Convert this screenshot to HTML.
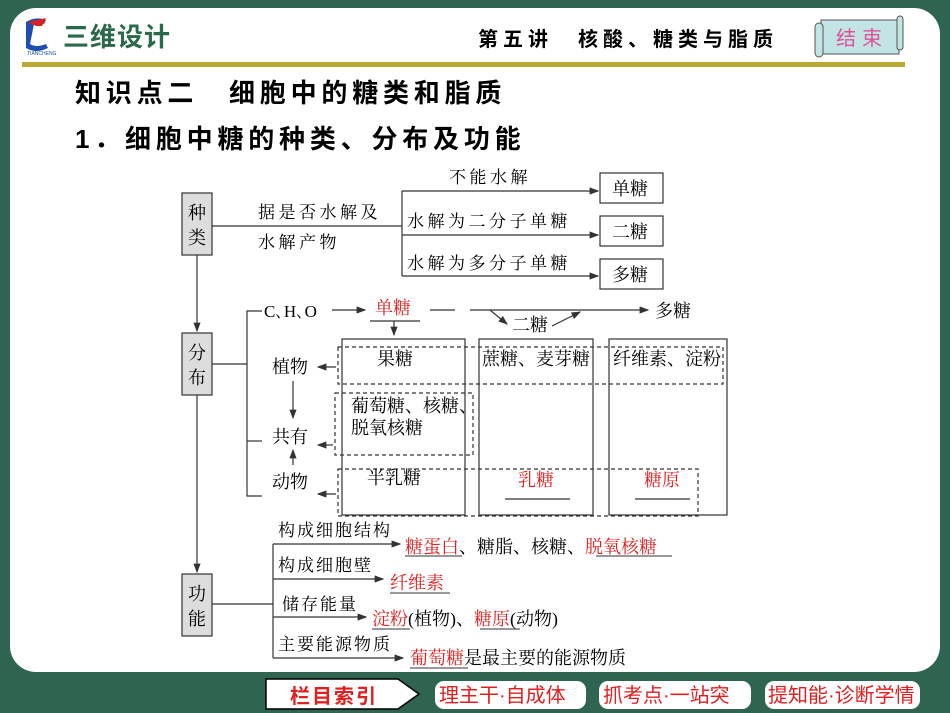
<!DOCTYPE html>
<html><head><meta charset="utf-8"><style>
body{margin:0;width:950px;height:713px;background:#2f6450;overflow:hidden;font-family:"Liberation Serif","Noto Serif CJK SC","Noto Sans CJK SC",serif;}
#card{position:absolute;left:10px;top:8px;width:930px;height:664px;background:#fff;border-radius:26px;}
svg{position:absolute;left:0;top:0}
</style></head><body>
<div id="card"></div>
<svg width="950" height="713" viewBox="0 0 950 713" font-family="'Liberation Serif','Noto Serif CJK SC',serif">
<defs><marker id="a" markerWidth="8" markerHeight="6" refX="7" refY="3" orient="auto"><path d="M0,0L8,3L0,6z" fill="#333"/></marker></defs>
<!-- header -->
<path d="M26,22 Q36,16 46,20 L44,24 Q38,22 34,24 L30,44 Q36,48 46,44 L48,48 Q36,54 26,48 Z" fill="#1e4fb0"/>
<path d="M28,22 L46,18 L42,26 L36,26 Z" fill="#e02020"/>
<text x="27" y="55" font-size="5" fill="#1e4fb0" font-family="Liberation Sans">TIANCHENG</text>
<text x="63" y="46" font-size="26" font-weight="bold" fill="#2a6a4a" font-family="'Liberation Sans','Noto Sans CJK SC',sans-serif" letter-spacing="1">三维设计</text>
<text x="478" y="46" font-size="20" font-weight="bold" fill="#000" font-family="'Liberation Sans','Noto Sans CJK SC',sans-serif" letter-spacing="5">第五讲　核酸、糖类与脂质</text>
<rect x="821" y="20" width="78" height="34" fill="#c2e4e4" stroke="#555" stroke-width="1"/>
<rect x="815" y="23" width="8" height="34" rx="4" fill="#c2e4e4" stroke="#555"/>
<rect x="897" y="16" width="6" height="34" rx="3" fill="#c2e4e4" stroke="#555"/>
<text x="836" y="45" font-size="20" fill="#e0509a" font-family="'Noto Sans CJK SC',sans-serif" letter-spacing="6">结束</text>
<rect x="22" y="62" width="883" height="5" fill="#b8aa35"/>
<g font-family="'Liberation Sans','Noto Sans CJK SC',sans-serif" font-weight="bold" font-size="26" fill="#000" letter-spacing="4.8">
<text x="75" y="102">知识点二　细胞中的糖类和脂质</text>
<text x="75" y="148">1．细胞中糖的种类、分布及功能</text>
</g>
<!-- diagram -->
<g stroke="#333" stroke-width="1.2" fill="none">
<rect x="182" y="193" width="30" height="62" fill="#ddd"/>
<rect x="182" y="333" width="30" height="62" fill="#ddd"/>
<rect x="182" y="574" width="30" height="62" fill="#ddd"/>
<line x1="197" y1="255" x2="197" y2="331" marker-end="url(#a)"/>
<line x1="197" y1="395" x2="197" y2="572" marker-end="url(#a)"/>
<line x1="212" y1="226" x2="402" y2="226"/>
<line x1="402" y1="191" x2="402" y2="276"/>
<line x1="402" y1="191" x2="598" y2="191" marker-end="url(#a)"/>
<line x1="402" y1="235" x2="598" y2="235" marker-end="url(#a)"/>
<line x1="402" y1="276" x2="598" y2="276" marker-end="url(#a)"/>
<rect x="600" y="173" width="63" height="30"/>
<rect x="600" y="216" width="63" height="30"/>
<rect x="600" y="259" width="63" height="30"/>
<line x1="212" y1="364" x2="247" y2="364"/>
<polyline points="262,311 247,311 247,496 262,496"/>
<line x1="247" y1="441" x2="262" y2="441"/>
<line x1="332" y1="310" x2="365" y2="310" marker-end="url(#a)"/>
<line x1="370" y1="321" x2="420" y2="321"/>
<line x1="394" y1="321" x2="394" y2="335" marker-end="url(#a)"/>
<line x1="430" y1="310" x2="455" y2="310"/>
<line x1="470" y1="310" x2="648" y2="310" marker-end="url(#a)"/>
<line x1="490" y1="310" x2="507" y2="324" marker-end="url(#a)"/>
<line x1="552" y1="326" x2="580" y2="312" marker-end="url(#a)"/>
<rect x="342" y="339" width="123" height="176"/>
<rect x="479" y="339" width="114" height="176"/>
<rect x="609" y="339" width="118" height="176"/>
<g stroke-dasharray="4,3">
<rect x="338" y="347" width="385" height="37"/>
<rect x="335" y="393" width="138" height="62"/>
<rect x="338" y="469" width="360" height="47"/>
</g>
<line x1="336" y1="367" x2="318" y2="367" marker-end="url(#a)"/>
<line x1="333" y1="445" x2="318" y2="445" marker-end="url(#a)"/>
<line x1="336" y1="494" x2="318" y2="494" marker-end="url(#a)"/>
<line x1="293" y1="381" x2="293" y2="418" marker-end="url(#a)"/>
<line x1="293" y1="465" x2="293" y2="450" marker-end="url(#a)"/>
<line x1="505" y1="499" x2="570" y2="499"/>
<line x1="635" y1="499" x2="690" y2="499"/>
<line x1="212" y1="604" x2="273" y2="604"/>
<line x1="273" y1="544" x2="273" y2="658"/>
<line x1="273" y1="544" x2="400" y2="544" marker-end="url(#a)"/>
<line x1="273" y1="579" x2="383" y2="579" marker-end="url(#a)"/>
<line x1="273" y1="617" x2="366" y2="617" marker-end="url(#a)"/>
<line x1="273" y1="658" x2="403" y2="658" marker-end="url(#a)"/>
<g stroke-width="1">
<line x1="405" y1="556" x2="462" y2="556"/><line x1="596" y1="556" x2="672" y2="556"/>
<line x1="390" y1="593" x2="450" y2="593"/><line x1="372" y1="629" x2="410" y2="629"/>
<line x1="480" y1="629" x2="520" y2="629"/><line x1="410" y1="668" x2="468" y2="668"/>
</g>
</g>
<g font-size="18" fill="#000">
<text x="188" y="219">种</text><text x="188" y="244">类</text>
<text x="188" y="359">分</text><text x="188" y="384">布</text>
<text x="188" y="600">功</text><text x="188" y="625">能</text>
<g font-size="17" letter-spacing="3.5">
<text x="258" y="218">据是否水解及</text>
<text x="258" y="248">水解产物</text>
<text x="449" y="183">不能水解</text>
<text x="407" y="227">水解为二分子单糖</text>
<text x="407" y="269">水解为多分子单糖</text>
</g>
<text x="612" y="195">单糖</text><text x="612" y="238">二糖</text><text x="612" y="281">多糖</text>
<text x="264" y="317" font-size="17">C､H､O</text>
<text x="375" y="314" fill="#e02020">单糖</text>
<text x="512" y="331">二糖</text>
<text x="655" y="317">多糖</text>
<text x="377" y="365">果糖</text>
<text x="482" y="365">蔗糖、麦芽糖</text>
<text x="613" y="365">纤维素、淀粉</text>
<text x="351" y="412">葡萄糖、核糖、</text>
<text x="351" y="434">脱氧核糖</text>
<text x="367" y="484">半乳糖</text>
<text x="518" y="486" fill="#e02020">乳糖</text>
<text x="644" y="486" fill="#e02020">糖原</text>
<text x="272" y="373">植物</text>
<text x="272" y="443">共有</text>
<text x="272" y="488">动物</text>
<g font-size="17" letter-spacing="2">
<text x="278" y="536">构成细胞结构</text>
<text x="278" y="571">构成细胞壁</text>
<text x="282" y="610">储存能量</text>
<text x="278" y="650">主要能源物质</text>
</g>
<text x="405" y="553"><tspan fill="#e02020">糖蛋白</tspan>、糖脂、核糖、<tspan fill="#e02020">脱氧核糖</tspan></text>
<text x="390" y="589" fill="#e02020">纤维素</text>
<text x="372" y="625"><tspan fill="#e02020">淀粉</tspan>(植物)、<tspan fill="#e02020">糖原</tspan>(动物)</text>
<text x="410" y="664"><tspan fill="#e02020">葡萄糖</tspan>是最主要的能源物质</text>
</g>
<!-- bottom nav -->
<path d="M266,679 L398,679 L419,694 L398,709 L266,709 Z" fill="#fff" stroke="#000" stroke-width="1.5"/>
<text x="290" y="703" font-size="20" font-weight="bold" fill="#e02020" font-family="'Liberation Sans','Noto Sans CJK SC',sans-serif" letter-spacing="2">栏目索引</text>
<g font-family="'Liberation Sans','Noto Sans CJK SC',sans-serif" font-size="20" fill="#e02020">
<rect x="435" y="681" width="151" height="28" rx="9" fill="#fff"/>
<rect x="599" y="681" width="152" height="28" rx="9" fill="#fff"/>
<rect x="765" y="681" width="155" height="28" rx="9" fill="#fff"/>
<text x="439" y="702">理主干·自成体</text>
<text x="603" y="702">抓考点·一站突</text>
<text x="768" y="702">提知能·诊断学情</text>
</g>
</svg>
</body></html>
